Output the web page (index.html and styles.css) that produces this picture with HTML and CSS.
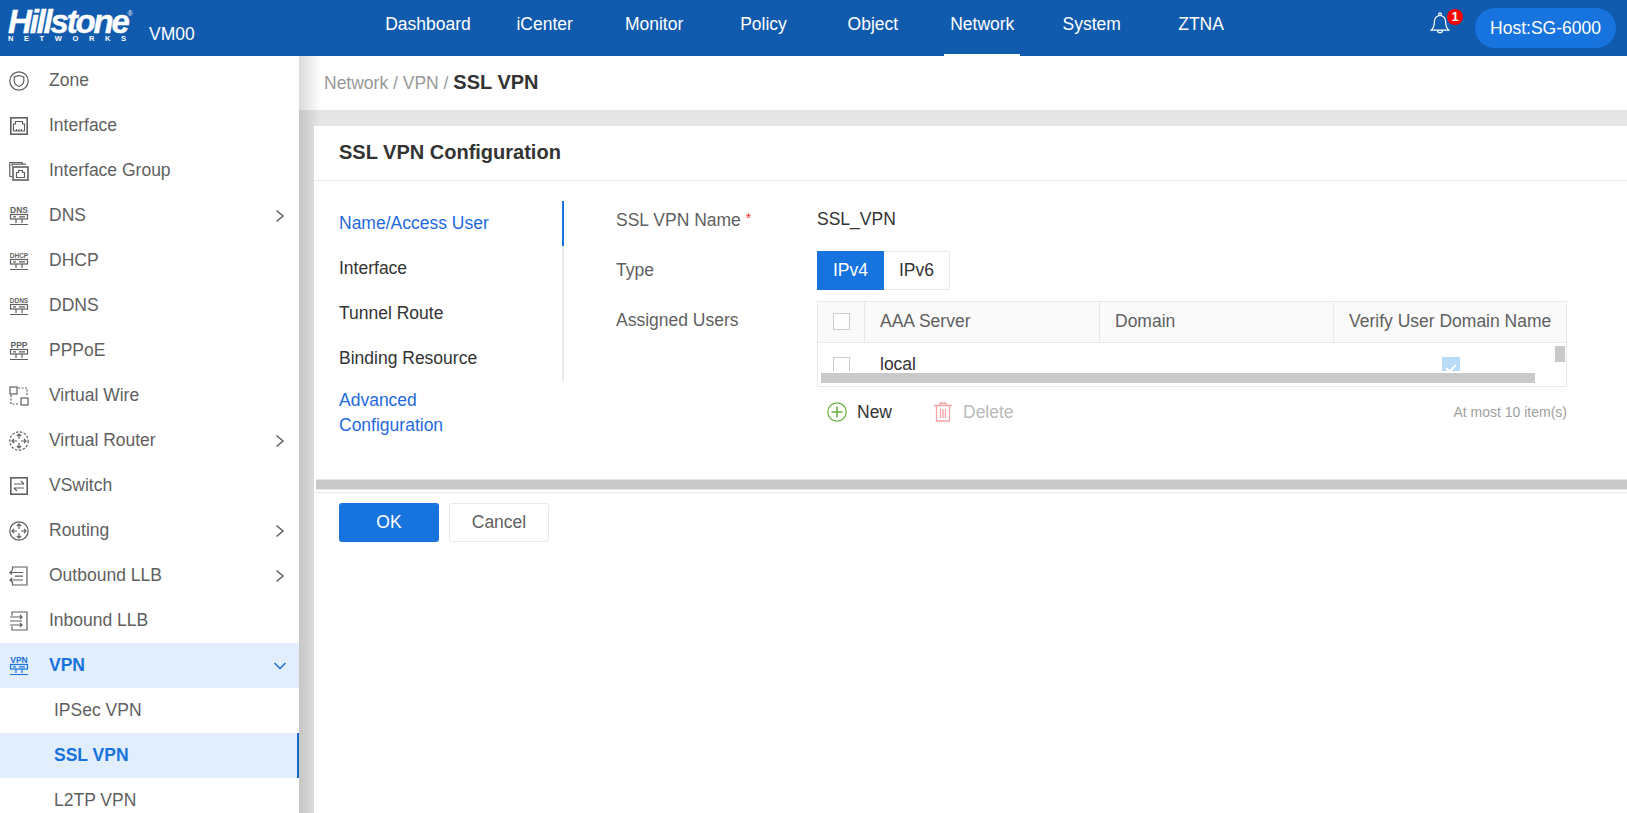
FILE: index.html
```html
<!DOCTYPE html>
<html lang="en">
<head>
    <meta charset="UTF-8">
    <meta name="viewport" content="width=device-width, initial-scale=1.0">
    <link rel="stylesheet" href="styles.css">
    <title>SSL VPN</title>
</head>
<body>

    <header class="topbar">
        <div class="brand">
            <div class="logo">
                <span class="logo-name">Hillstone<sup class="logo-mark">®</sup></span>
                <span class="logo-sub">NETWORKS</span>
            </div>
            <span class="vm-name">VM00</span>
        </div>
        <nav class="topnav">
            <a class="nav-first"><span>Dashboard</span></a>
            <a><span>iCenter</span></a>
            <a><span>Monitor</span></a>
            <a><span>Policy</span></a>
            <a><span>Object</span></a>
            <a class="active"><span>Network</span></a>
            <a><span>System</span></a>
            <a><span>ZTNA</span></a>
        </nav>
        <div class="bell">
            <svg width="22" height="24" viewBox="0 0 22 24" fill="none" stroke="#fff" stroke-width="1.2">
                <path d="M11 3.5c-3.600 0-5.600 2.800-5.600 6.300 0 4.200-1.200 6.600-3.200 8.400h17.600c-2-1.800-3.200-4.200-3.200-8.400 0-3.500-2-6.300-5.600-6.300z"/>
                <circle cx="11" cy="2.300" r="1.400"/>
                <path d="M8.600 18.400c0 3 4.800 3 4.800 0"/>
            </svg>
            <span class="bell-count">1</span>
        </div>
        <div class="host">Host:SG-6000</div>
    </header>

    <svg class="defs" width="0" height="0">
        <symbol id="net-box" viewBox="0 0 20 20">
            <rect x="1.500" y="8.500" width="17" height="4.500"/>
            <path d="M7 13v4M13 13v4M1 18.500h18M4 10.800h3M10 10.800h6"/>
        </symbol>
        <symbol id="four-arrows" viewBox="0 0 20 20">
            <path d="M10 3v5M7.800 5L10 3l2.200 2M10 17v-5M7.800 15l2.200 2 2.200-2M3 10h5M5 7.800L3 10l2 2.200M17 10h-5M15 7.800l2 2.200-2 2.200"/>
        </symbol>
    </svg>

    <div class="layout">
        <aside class="sidebar">
            <a class="side-item">
                <svg class="side-icon" viewBox="0 0 20 20"><circle cx="10" cy="10" r="9.200"/><path d="M10 4.500l4.800 1.500v4c0 2.600-2.200 4.400-4.800 5.500-2.600-1.100-4.800-2.900-4.800-5.500V6z"/></svg>
                <span>Zone</span>
            </a>
            <a class="side-item">
                <svg class="side-icon" viewBox="0 0 20 20"><rect class="thick" x="1.800" y="1.800" width="16.400" height="16.400"/><path d="M4.500 15V8h2V5.500h7V8h2v7z"/><path d="M7.500 15v-2M10 15v-2M12.500 15v-2"/></svg>
                <span>Interface</span>
            </a>
            <a class="side-item">
                <svg class="side-icon" viewBox="0 0 20 20"><path d="M3 15.500H.8V1.500h12.400v2"/><path d="M3 5V3.200h14"/><rect class="thick" x="4" y="6" width="15" height="13"/><path d="M7.500 16.500v-5h2V9.500h4v2h2v5z"/></svg>
                <span>Interface Group</span>
            </a>
            <a class="side-item">
                <svg class="side-icon" viewBox="0 0 20 20"><use href="#net-box"/></svg>
                <span class="icon-label">DNS</span>
                <span>DNS</span>
                <svg class="side-arrow" viewBox="0 0 10 14"><path d="M1.500 1.500L8 7l-6.500 5.500"/></svg>
            </a>
            <a class="side-item">
                <svg class="side-icon" viewBox="0 0 20 20"><use href="#net-box"/></svg>
                <span class="icon-label small">DHCP</span>
                <span>DHCP</span>
            </a>
            <a class="side-item">
                <svg class="side-icon" viewBox="0 0 20 20"><use href="#net-box"/></svg>
                <span class="icon-label small">DDNS</span>
                <span>DDNS</span>
            </a>
            <a class="side-item">
                <svg class="side-icon" viewBox="0 0 20 20"><use href="#net-box"/></svg>
                <span class="icon-label">PPP</span>
                <span>PPPoE</span>
            </a>
            <a class="side-item">
                <svg class="side-icon" viewBox="0 0 20 20"><rect x="1" y="1" width="7" height="7"/><rect x="12" y="12" width="7" height="7"/><path stroke-dasharray="2 1.500" d="M9 2h9v8M2 9v9h8"/></svg>
                <span>Virtual Wire</span>
            </a>
            <a class="side-item">
                <svg class="side-icon" viewBox="0 0 20 20"><circle stroke-dasharray="2.500 1.500" cx="10" cy="10" r="9.200"/><use href="#four-arrows"/></svg>
                <span>Virtual Router</span>
                <svg class="side-arrow" viewBox="0 0 10 14"><path d="M1.500 1.500L8 7l-6.500 5.500"/></svg>
            </a>
            <a class="side-item">
                <svg class="side-icon" viewBox="0 0 20 20"><rect class="thick" x="1.800" y="1.800" width="16.400" height="16.400"/><path d="M5 8h10M12 5l3 3M15 12H5M8 15l-3-3"/></svg>
                <span>VSwitch</span>
            </a>
            <a class="side-item">
                <svg class="side-icon" viewBox="0 0 20 20"><circle cx="10" cy="10" r="9.200"/><use href="#four-arrows"/></svg>
                <span>Routing</span>
                <svg class="side-arrow" viewBox="0 0 10 14"><path d="M1.500 1.500L8 7l-6.500 5.500"/></svg>
            </a>
            <a class="side-item">
                <svg class="side-icon" viewBox="0 0 20 20"><path d="M3.500 4.500V1h14.500v18H3.500v-3.500"/><path d="M1 6.500h13M3 4.500l-2 2 2 2M1 14h13M3 12l-2 2 2 2M6 10.200h8"/></svg>
                <span>Outbound LLB</span>
                <svg class="side-arrow" viewBox="0 0 10 14"><path d="M1.500 1.500L8 7l-6.500 5.500"/></svg>
            </a>
            <a class="side-item">
                <svg class="side-icon" viewBox="0 0 20 20"><path d="M3 4.500V1h15v18H3v-3.500"/><path d="M1 6h12M11 4l2 2-2 2M1 14h12M11 12l2 2-2 2M1 10h12"/></svg>
                <span>Inbound LLB</span>
            </a>
            <a class="side-item open">
                <svg class="side-icon" viewBox="0 0 20 20"><use href="#net-box"/></svg>
                <span class="icon-label">VPN</span>
                <span>VPN</span>
                <svg class="side-arrow down" viewBox="0 0 14 10"><path d="M1.500 2L7 7.500 12.500 2"/></svg>
            </a>
            <a class="side-sub">IPSec VPN</a>
            <a class="side-sub current">SSL VPN</a>
            <a class="side-sub">L2TP VPN</a>
        </aside>

        <main class="content">
            <div class="breadcrumb">
                <span>Network / VPN / </span><strong>SSL VPN</strong>
            </div>
            <div class="card">
                <h2 class="card-title">SSL VPN Configuration</h2>
                <div class="card-body">
                    <ul class="steps">
                        <li class="step blue on">Name/Access User</li>
                        <li class="step">Interface</li>
                        <li class="step">Tunnel Route</li>
                        <li class="step">Binding Resource</li>
                        <li class="step-last blue">Advanced Configuration</li>
                    </ul>
                    <div class="form">
                        <div class="row row-name">
                            <label>SSL VPN Name <i>*</i></label>
                            <span class="value">SSL_VPN</span>
                        </div>
                        <div class="row row-type">
                            <label>Type</label>
                            <div class="toggle">
                                <span class="toggle-btn on">IPv4</span>
                                <span class="toggle-btn">IPv6</span>
                            </div>
                        </div>
                        <div class="row row-users">
                            <label>Assigned Users</label>
                            <div class="users">
                                <div class="grid">
                                    <div class="grid-head">
                                        <div class="cell c-check"><span class="checkbox"></span></div>
                                        <div class="cell c-server">AAA Server</div>
                                        <div class="cell c-domain">Domain</div>
                                        <div class="cell c-verify">Verify User Domain Name</div>
                                    </div>
                                    <div class="grid-row">
                                        <div class="c-check"><span class="checkbox"></span></div>
                                        <div class="c-server local">local</div>
                                        <div class="c-domain"></div>
                                        <div class="c-verify"><span class="verified"><svg width="12" height="10" viewBox="0 0 12 10" fill="none" stroke="#fff" stroke-width="2"><path d="M1 5l3.500 3.500L11 2"/></svg></span></div>
                                    </div>
                                    <span class="scroll-h"></span>
                                    <span class="scroll-v"></span>
                                </div>
                                <div class="grid-actions">
                                    <a class="action">
                                        <svg width="20" height="20" viewBox="0 0 20 20" fill="none" stroke="#6cb33f" stroke-width="1.200"><circle cx="10" cy="10" r="9.200"/><path stroke-width="1.600" d="M10 4.500v11M4.500 10h11"/></svg>
                                        New
                                    </a>
                                    <a class="action off">
                                        <svg width="18" height="20" viewBox="0 0 18 20" fill="none" stroke="#f5a3a3" stroke-width="1.300"><path d="M0 3.500h18M6 3.500V1h6v2.500M2.500 3.500V19h13V3.500M6.500 7v9M9 7v9M11.500 7v9"/></svg>
                                        Delete
                                    </a>
                                    <span class="limit">At most 10 item(s)</span>
                                </div>
                            </div>
                        </div>
                    </div>
                </div>
                <div class="scroll-bottom"></div>
                <div class="card-foot">
                    <button class="btn btn-ok" type="button">OK</button>
                    <button class="btn" type="button">Cancel</button>
                </div>
            </div>
        </main>
    </div>

</body>
</html>
```

FILE: styles.css
```css
* {
    box-sizing: border-box;
}

html, body {
    height: 100%;
}

body {
    margin: 0;
    overflow: hidden;
    font-family: "Liberation Sans", Arial, sans-serif;
    font-size: 17.5px;
    color: #333;
    background: #fff;
}

.defs {
    position: absolute;
}

/* top bar */
.topbar {
    display: flex;
    align-items: center;
    height: 56px;
    background: #115bae;
    color: #fff;
}

.brand {
    display: flex;
    width: 373px;
    height: 56px;
    flex: none;
    padding-left: 8px;
}

.logo {
    display: flex;
    flex-direction: column;
    width: 122px;
    padding-top: 6.500px;
    white-space: nowrap;
}

.logo-name {
    font-size: 33px;
    line-height: 29px;
    font-weight: bold;
    font-style: italic;
    letter-spacing: -2.200px;
    -webkit-text-stroke: 0.400px #fff;
}

.logo-mark {
    font-size: 7px;
    line-height: 0;
    font-style: normal;
    font-weight: normal;
    letter-spacing: 0;
    vertical-align: 17px;
    -webkit-text-stroke: 0;
}

.logo-sub {
    font-size: 7.500px;
    line-height: 6px;
    font-weight: bold;
    letter-spacing: 10.600px;
}

.vm-name {
    margin: 24px 0 0 19px;
    line-height: 20px;
}

.topnav {
    display: flex;
    flex: 1;
    height: 56px;
}

.topnav a {
    display: flex;
    justify-content: center;
    width: 109.400px;
    white-space: nowrap;
}

.topnav a.nav-first {
    width: 110px;
    margin-right: 7px;
}

.topnav span {
    height: 56px;
    padding: 0 6px;
    line-height: 49px;
}

.topnav .active span {
    border-bottom: 2px solid #fff;
}

.bell {
    position: relative;
    width: 44px;
    height: 26px;
    margin-bottom: 6px;
}

.bell-count {
    position: absolute;
    left: 18px;
    top: -3px;
    width: 16px;
    height: 16px;
    border-radius: 50%;
    background: #f00;
    font-size: 13px;
    font-weight: bold;
    line-height: 15px;
    text-align: center;
}

.host {
    width: 141px;
    height: 40px;
    margin: 0 11px 0 2px;
    border-radius: 20px;
    background: #1773dd;
    line-height: 40px;
    text-align: center;
}

/* sidebar */
.layout {
    display: flex;
    height: 757px;
}

.sidebar {
    flex: none;
    width: 299px;
    padding-top: 2px;
    overflow: hidden;
}

.side-item, .side-sub {
    position: relative;
    display: flex;
    align-items: center;
    height: 45px;
    color: #5f5f5f;
    white-space: nowrap;
}

.side-item {
    padding-left: 9px;
}

.side-icon {
    flex: none;
    width: 20px;
    height: 20px;
    margin-right: 20px;
    fill: none;
    stroke: #5f5f5f;
    stroke-width: 1.200;
}

.side-icon .thick {
    stroke-width: 1.600;
}

.icon-label {
    position: absolute;
    left: 9px;
    top: 13px;
    width: 20px;
    font-size: 8.500px;
    line-height: 9px;
    font-weight: bold;
    text-align: center;
}

.icon-label.small {
    font-size: 6.500px;
}

.side-arrow {
    position: absolute;
    right: 14px;
    top: 16px;
    width: 10px;
    height: 14px;
    fill: none;
    stroke: #5f5f5f;
    stroke-width: 1.500;
}

.side-arrow.down {
    right: 12px;
    top: 18px;
    width: 14px;
    height: 10px;
    stroke: #1773dd;
}

.side-item.open {
    background: #e3eefc;
    color: #1773dd;
    font-weight: bold;
}

.side-item.open .side-icon {
    stroke: #1773dd;
}

.side-sub {
    padding-left: 54px;
}

.side-sub.current {
    border-right: 2px solid #1567c8;
    background: #e3eefc;
    color: #1773dd;
    font-weight: bold;
}

/* main area */
.content {
    flex: 1;
    min-width: 0;
    background: linear-gradient(90deg, rgba(0, 0, 0, 0.14), rgba(0, 0, 0, 0) 22px),
        linear-gradient(#fff 54px, #e6e6e6 54px);
}

.breadcrumb {
    height: 54px;
    padding-left: 25px;
    color: #999;
    line-height: 52px;
}

.breadcrumb strong {
    color: #333;
    font-size: 20px;
}

.card {
    height: 687px;
    margin: 16px 0 0 15px;
    background: #fff;
}

.card-title {
    height: 55px;
    margin: 0;
    padding-left: 25px;
    border-bottom: 1px solid #e8e8e8;
    font-size: 20px;
    line-height: 52px;
}

.card-body {
    display: flex;
    height: 291px;
    padding: 20px 0 0 25px;
}

.steps {
    flex: none;
    width: 225px;
    height: 180px;
    margin: 0;
    padding: 0;
    border-right: 2px solid #e8e8e8;
    list-style: none;
}

.step {
    position: relative;
    height: 45px;
    line-height: 44px;
    margin-right: -2px;
}

.step.on {
    border-right: 2px solid #1773dd;
}

.blue {
    color: #1f6adf;
}

.step-last {
    width: 120px;
    padding-top: 7px;
    line-height: 25px;
}

.form {
    flex: 1;
    padding: 1px 0 0 52px;
}

.row {
    display: flex;
}

.row label {
    flex: none;
    width: 201px;
    color: #5f5f5f;
}

.row label i {
    color: #e33;
    font-style: normal;
    font-size: 14px;
    vertical-align: 3px;
}

.row-name {
    height: 49px;
    padding-top: 8px;
}

.value {
    margin-top: -1px;
}

.row-type {
    height: 50px;
}

.row-type label {
    padding-top: 9px;
}

.row-users label {
    padding-top: 9px;
}

.toggle {
    display: flex;
    height: 39px;
}

.toggle-btn {
    width: 66px;
    border: 1px solid #e8e8e8;
    border-left: 0;
    line-height: 37px;
    text-align: center;
}

.toggle-btn.on {
    width: 67px;
    border: 0;
    background: #1773dd;
    color: #fff;
    line-height: 39px;
}

.users {
    width: 750px;
}

.grid {
    position: relative;
    height: 86px;
    overflow: hidden;
    border: 1px solid #e8e8e8;
}

.grid-head, .grid-row {
    display: flex;
}

.grid-head {
    height: 41px;
    border-bottom: 1px solid #e8e8e8;
    background: #fafafa;
    color: #5f5f5f;
}

.grid-row {
    height: 28px;
    overflow: hidden;
}

.cell {
    border-right: 1px solid #e8e8e8;
    line-height: 38px;
}

.cell:last-child {
    border-right: 0;
}

.c-check {
    display: flex;
    justify-content: center;
    flex: none;
    width: 47px;
    padding-top: 11px;
}

.c-server {
    flex: none;
    width: 235px;
    padding-left: 15px;
}

.c-domain {
    flex: none;
    width: 234px;
    padding-left: 15px;
}

.c-verify {
    flex: 1;
    padding-left: 15px;
    white-space: nowrap;
}

.grid-row .c-check {
    padding-top: 14px;
}

.grid-row .c-verify {
    padding: 14px 0 0 108px;
}

.local {
    padding-top: 11px;
}

.checkbox {
    display: block;
    width: 17px;
    height: 17px;
    border: 1px solid #ccc;
    background: #fff;
}

.verified {
    display: block;
    width: 18px;
    height: 18px;
    padding: 6px 0 0 3px;
    background: #b8dcf8;
}

.verified svg {
    display: block;
}

.scroll-h {
    position: absolute;
    left: 3px;
    right: 31px;
    bottom: 3px;
    height: 10px;
    background: #c9c9c9;
}

.scroll-v {
    position: absolute;
    right: 1px;
    top: 44px;
    width: 10px;
    height: 16px;
    background: #c9c9c9;
}

.grid-actions {
    display: flex;
    align-items: center;
    height: 50px;
    padding-left: 10px;
}

.action {
    display: flex;
    align-items: center;
    gap: 10px;
    width: 107px;
}

.action.off {
    flex: 1;
    gap: 11px;
    color: #b9b9b9;
}

.limit {
    color: #a0a0a0;
    font-size: 14px;
}

.scroll-bottom {
    height: 11px;
    margin: 7px 0 2px 2px;
    border: 1px solid #e4e4e4;
    border-width: 1px 0;
    background: #c9c9c9;
}

.card-foot {
    display: flex;
    gap: 10px;
    padding: 10px 25px;
    border-top: 1px solid #e8e8e8;
}

.btn {
    width: 100px;
    height: 39px;
    border: 1px solid #e8e8e8;
    border-radius: 3px;
    background: #fff;
    color: #5f5f5f;
    font-family: inherit;
    font-size: 17.500px;
}

.btn-ok {
    border: 0;
    background: #1773dd;
    color: #fff;
}
```
